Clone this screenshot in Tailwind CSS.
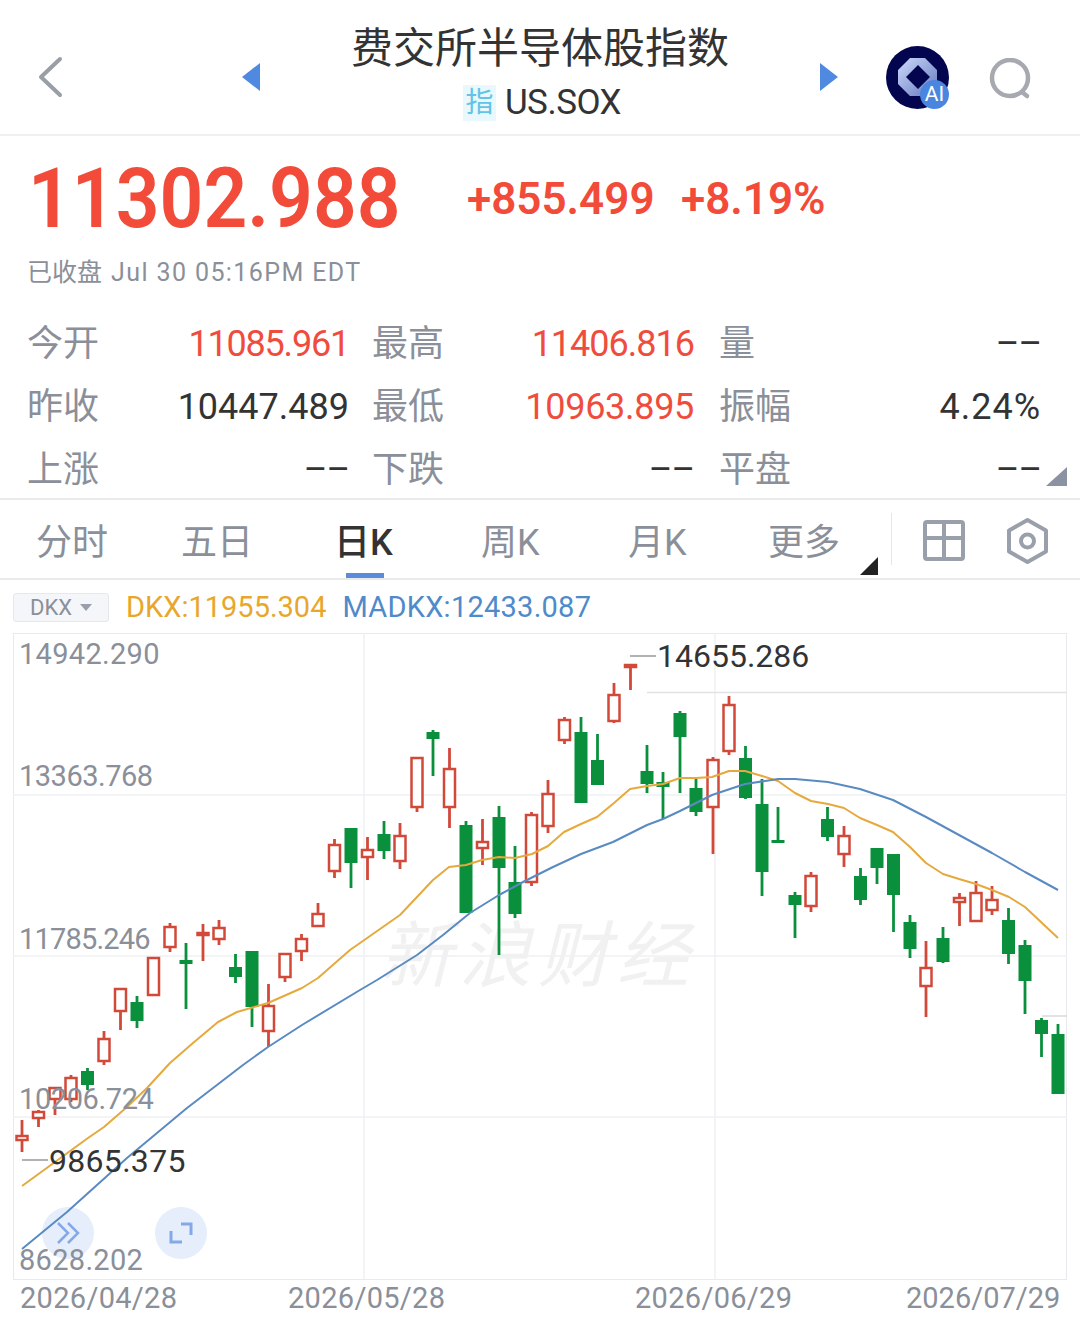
<!DOCTYPE html>
<html lang="zh-CN">
<head>
<meta charset="UTF-8">
<meta name="viewport" content="width=device-width, initial-scale=1.0">
<title>费交所半导体股指数</title>
<script src="https://cdn.jsdelivr.net/npm/@tailwindcss/browser@4"></script>
</head>
<body class="bg-white">
<div class="w-[1080px] h-[1325px] overflow-hidden bg-white font-['Roboto','Noto_Sans_CJK_SC',sans-serif]">

  <!-- header -->
  <header class="h-[136px] border-b-2 border-[#f0f0f0] flex items-start relative">
    <div class="w-[242px] pl-[38px] pt-[56px]">
      <svg width="26" height="42" viewBox="0 0 26 42" fill="none" stroke="#9a9ea6" stroke-width="4" stroke-linecap="round" stroke-linejoin="round"><path d="M22 3 3 21l19 18"/></svg>
    </div>
    <div class="pt-[63px]"><svg width="19" height="28" viewBox="0 0 19 28"><path d="M18 0v28L0 14z" fill="#4f8ae0"/></svg></div>
    <div class="w-[558px] flex flex-col items-center pt-[22px]">
      <h1 class="text-[42px] leading-[54px] text-[#333333] font-normal">费交所半导体股指数</h1>
      <div class="flex items-center mt-[9px] ml-[4px]">
        <span class="w-[33px] h-[36px] bg-[#e8f8fd] text-[#62c3e6] text-[28px] leading-[36px] text-center">指</span>
        <span class="ml-[9px] text-[35px] leading-[36px] text-[#333333] tracking-[-0.5px]">US.SOX</span>
      </div>
    </div>
    <div class="pt-[63px]"><svg width="19" height="28" viewBox="0 0 19 28"><path d="M1 0v28l18-14z" fill="#4f8ae0"/></svg></div>
    <div class="absolute left-[886px] top-[46px] w-[63px] h-[63px]">
      <svg width="63" height="63" viewBox="0 0 63 63">
        <defs><linearGradient id="ring" x1="0" y1="0" x2="1" y2="1"><stop offset="0" stop-color="#cddafc"/><stop offset="1" stop-color="#6478bd"/></linearGradient></defs>
        <circle cx="31.5" cy="31.500" r="31.5" fill="#03064f"/>
        <path fill-rule="evenodd" d="M24 12H39L51 24V38L39 50H24L12 38V24ZM32 19 20 31 32 43 44 31Z" fill="url(#ring)"/>
      </svg>
      <span class="absolute left-[34px] top-[34px] w-[29px] h-[29px] rounded-full bg-[#4a86e0] text-white text-[21px] leading-[29px] text-center">AI</span>
    </div>
    <div class="absolute left-[989px] top-[58px]">
      <svg width="43" height="43" viewBox="0 0 43 43" fill="none" stroke="#a6a9af" stroke-width="4.5" stroke-linecap="round"><circle cx="21" cy="20" r="18"/><path d="M33 34l5 4"/></svg>
    </div>
  </header>

  <!-- quote -->
  <section class="h-[362px] relative">
    <div class="flex items-center pl-[28px] pt-[20px] h-[106px]">
      <span class="w-[439px] text-[83px] leading-[90px] font-semibold text-[#f24b39] origin-left scale-x-[0.925]">11302.988</span>
      <span class="w-[214px] text-[44px] font-semibold text-[#f24b39]">+855.499</span>
      <span class="text-[44px] font-semibold text-[#f24b39]">+8.19%</span>
    </div>
    <p class="pl-[27px] mt-[16px] text-[25px] leading-[30px] text-[#8a8f99]">已收盘<span class="ml-[9px] tracking-[1.4px]">Jul 30 05:16PM EDT</span></p>
    <div class="grid grid-cols-[345px_347px_322px] pl-[27px] mt-[25px] text-[36px] leading-[63px] text-[#8a8f99]">
      <div class="flex justify-between"><span>今开</span><span class="text-[#f04c3e] mr-[23px] tracking-[-1.2px]">11085.961</span></div>
      <div class="flex justify-between"><span>最高</span><span class="text-[#f04c3e] mr-[25px] tracking-[-1px]">11406.816</span></div>
      <div class="flex justify-between"><span>量</span><span class="text-[#333333] tracking-[-1px]">––</span></div>
      <div class="flex justify-between"><span>昨收</span><span class="text-[#333333] mr-[23px]">10447.489</span></div>
      <div class="flex justify-between"><span>最低</span><span class="text-[#f04c3e] mr-[25px] tracking-[-0.3px]">10963.895</span></div>
      <div class="flex justify-between"><span>振幅</span><span class="text-[#333333] tracking-[1px]">4.24%</span></div>
      <div class="flex justify-between"><span>上涨</span><span class="text-[#333333] mr-[23px] tracking-[-1px]">––</span></div>
      <div class="flex justify-between"><span>下跌</span><span class="text-[#333333] mr-[25px] tracking-[-1px]">––</span></div>
      <div class="flex justify-between"><span>平盘</span><span class="text-[#333333] tracking-[-1px]">––</span></div>
    </div>
    <div class="absolute right-[13px] bottom-[12px] w-0 h-0 border-l-[21px] border-l-transparent border-b-[19px] border-b-[#8b93a3]"></div>
  </section>

  <!-- period tabs -->
  <nav class="h-[82px] border-t-2 border-b-2 border-[#eaeaea] flex items-center relative text-[36px] text-[#8a8f99]">
    <span class="absolute left-[36px] top-[16px]">分时</span>
    <span class="absolute left-[181px] top-[16px]">五日</span>
    <span class="absolute left-[334px] top-[16px] text-[#333333] font-medium">日K</span>
    <span class="absolute left-[481px] top-[16px]">周K</span>
    <span class="absolute left-[628px] top-[16px]">月K</span>
    <span class="absolute left-[768px] top-[16px]">更多</span>
    <span class="absolute left-[346px] bottom-0 w-[38px] h-[5px] bg-[#5b8bd9]"></span>
    <span class="absolute left-[860px] top-[57px] w-0 h-0 border-l-[18px] border-l-transparent border-b-[18px] border-b-[#222222]"></span>
    <span class="absolute left-[891px] top-[13px] w-px h-[52px] bg-[#e6e6e6]"></span>
    <svg class="absolute left-[923px] top-[20px]" width="42" height="41" viewBox="0 0 42 41" fill="none" stroke="#9aa0ab" stroke-width="4" stroke-linejoin="round"><rect x="2" y="2" width="38" height="37" rx="2"/><path d="M21 2v37M2 18h38"/></svg>
    <svg class="absolute left-[1007px] top-[18px]" width="41" height="46" viewBox="0 0 41 46" fill="none" stroke="#9aa0ab" stroke-width="4" stroke-linejoin="round"><path d="M20.5 2 39 12.5v21L20.5 44 2 33.500v-21z"/><circle cx="20.500" cy="23" r="6.500"/></svg>
  </nav>

  <!-- indicator legend -->
  <div class="h-[53px] flex items-center pl-[13px] pt-[2px] text-[29px]">
    <div class="w-[96px] h-[29px] flex items-center justify-center bg-[#f5f6f9] border border-[#e6e8ee] rounded-[3px] text-[22px] text-[#8a8f99]">DKX<span class="ml-[8px] w-0 h-0 border-x-[6px] border-x-transparent border-t-[7px] border-t-[#9aa0ab]"></span></div>
    <span class="ml-[17px] text-[#e8a72c]">DKX:11955.304</span>
    <span class="ml-[16px] text-[#4f8ac9] tracking-[0.25px]">MADKX:12433.087</span>
  </div>

  <!-- k-line chart -->
  <div class="relative ml-[13px] w-[1054px] h-[647px] border border-[#e8eaee]">
    <span class="absolute left-[366px] top-[283px] text-[72px] leading-[80px] italic text-[#f1f1f1] tracking-[7px]">新浪财经</span>
    <div class="absolute left-[28px] top-[573px] w-[52px] h-[52px] rounded-full bg-[#dfeaf9]/80"></div>
    <div class="absolute left-[141px] top-[573px] w-[52px] h-[52px] rounded-full bg-[#dfeaf9]/80"></div>
    <svg id="chart" class="absolute left-[-1px] top-[-1px]" width="1054" height="647" viewBox="13 633 1054 647"></svg>
    <span class="absolute left-[5px] top-[3px] text-[29px] leading-[34px] text-[#8a8f99] tracking-[0.3px]">14942.290</span>
    <span class="absolute left-[5px] top-[125px] text-[29px] leading-[34px] text-[#8a8f99] tracking-[-0.5px]">13363.768</span>
    <span class="absolute left-[5px] top-[288px] text-[29px] leading-[34px] text-[#8a8f99] tracking-[-0.8px]">11785.246</span>
    <span class="absolute left-[5px] top-[448px] text-[29px] leading-[34px] text-[#8a8f99] tracking-[-0.4px]">10206.724</span>
    <span class="absolute left-[5px] top-[609px] text-[29px] leading-[34px] text-[#8a8f99] tracking-[0.3px]">8628.202</span>
    <span class="absolute left-[643px] top-[4px] text-[32px] leading-[36px] text-[#333333]">14655.286</span>
    <span class="absolute left-[35px] top-[509px] text-[32px] leading-[36px] text-[#333333] tracking-[0.3px]">9865.375</span>
  </div>

  <!-- date axis -->
  <div class="relative h-[40px] text-[29px] leading-[36px] text-[#8a8f99] tracking-[0.3px]">
    <span class="absolute left-[20px] top-0">2026/04/28</span>
    <span class="absolute left-[288px] top-0">2026/05/28</span>
    <span class="absolute left-[635px] top-0">2026/06/29</span>
    <span class="absolute left-[906px] top-0 tracking-normal">2026/07/29</span>
  </div>
</div>

<script>
  // x, high, body top, body bottom, low, up?
  const candles = [
    [22,1120,1135,1141,1152,1],[38.5,1110,1111,1119,1127,1],[55,1087,1087,1100,1115,1],[71,1075,1077,1100,1102,1],
    [87.5,1068,1071,1085,1090,0],[104,1031,1038,1062,1065,1],[120.5,988,988,1012,1030,1],[137,996,1002,1021,1028,0],
    [153.5,957,957,996,996,1],[170,923,926,948,952,1],[186,943,960,964,1009,0],[203,924,932,936,961,1],
    [219,920,927,940,945,1],[235.5,954,967,977,983,0],[252,951,951,1007,1027,0],[268.5,984,1005,1032,1047,1],
    [285,953,953,978,982,1],[301.5,934,938,952,961,1],[318,903,913,927,927,1],[334.5,839,844,872,878,1],
    [351,828,828,863,888,0],[367.5,837,849,858,880,1],[384,821,834,851,859,0],[400,823,835,862,869,1],
    [417,757,757,808,812,1],[433,730,732,739,776,0],[449.5,748,768,808,828,1],[466,821,825,913,913,0],
    [482.5,819,841,849,865,1],[499,806,817,868,955,0],[515,846,882,914,918,0],[531.5,812,814,883,886,1],
    [548,780,793,827,833,1],[564.5,717,719,741,744,1],[581,717,732,803,803,0],[597.5,734,760,785,785,0],
    [614,683,694,722,723,1],[630.5,664,664,668,690,1],[647,745,771,784,793,0],[663,772,782,787,819,0],
    [680,711,713,737,793,0],[696,779,788,812,816,0],[713,757,759,808,854,1],[729,696,704,752,755,1],
    [745.5,746,758,798,799,0],[762,779,804,872,896,0],[778,807,840,843,843,0],[795,892,895,905,938,0],
    [811,872,875,907,912,1],[827.5,807,819,837,841,0],[844,826,835,855,867,1],[860.5,868,876,900,905,0],
    [877,848,848,868,884,0],[893.5,854,854,895,932,0],[910,915,922,949,958,0],[926,941,967,987,1017,1],
    [943,927,938,962,963,0],[959.5,893,897,903,926,1],[976,881,892,922,922,1],[992,886,899,911,915,1],
    [1008.5,908,920,954,964,0],[1025,940,945,981,1014,0],[1041.5,1018,1020,1034,1057,0],[1058,1024,1034,1094,1094,0]
  ];
  const dkx = "22,1186 55,1162 88,1138 104,1127 127,1107 147,1088 170,1063 193,1043 218,1022 237,1012 268,1003 302,988 318,978 350,950 400,915 433,880 449,867 466,865 482,860 499,857 515,858 532,854 548,846 564,832 581,824 597,817 614,803 630,789 647,786 663,784 680,778 696,778 712,777 729,771 745,771 762,776 778,781 795,793 811,801 828,804 844,808 860,818 877,825 893,832 910,847 926,863 943,874 959,879 976,884 992,890 1009,897 1025,907 1042,923 1058,938";
  const madkx = "22,1249 67,1212 127,1158 187,1108 243,1065 268,1047 302,1025 360,990 377,980 417,955 443,935 470,913 499,895 523,882 553,867 581,854 613,842 647,825 663,819 680,811 712,795 745,784 778,779 795,779 828,782 860,789 893,800 926,817 959,835 992,853 1025,872 1058,890";

  const red = "#d2493a", green = "#0a8f3c", grid = "#eef0f3";
  let svg = "";
  // grid
  [795, 956, 1117].forEach(y => svg += `<path d="M13 ${y}H1067" stroke="${grid}" stroke-width="1.500"/>`);
  [364, 715].forEach(x => svg += `<path d="M${x} 633V1279" stroke="${grid}" stroke-width="1.500"/>`);
  candles.forEach(([x, hi, top, bot, lo, up]) => {
    const c = up ? red : green;
    svg += `<path d="M${x} ${hi}V${lo}" stroke="${c}" stroke-width="2.800"/>`;
    if (up) svg += `<rect x="${x - 5.500}" y="${top + 1}" width="11" height="${Math.max(bot - top - 2, 1)}" fill="#fff" stroke="${c}" stroke-width="2.500"/>`;
    else svg += `<rect x="${x - 6.500}" y="${top}" width="13" height="${bot - top}" fill="${c}"/>`;
  });
  svg += `<polyline points="${dkx}" fill="none" stroke="#e5a93d" stroke-width="2" stroke-linejoin="round"/>`;
  svg += `<polyline points="${madkx}" fill="none" stroke="#5a8ac2" stroke-width="2" stroke-linejoin="round"/>`;
  // high / low markers
  svg += `<path d="M630 656H656" stroke="#999" stroke-width="1.500"/><path d="M647 692.500H1067" stroke="#e2e2e2" stroke-width="1.500"/>`;
  svg += `<path d="M22 1160H48" stroke="#999" stroke-width="1.500"/><path d="M1042 1016H1067" stroke="#d8d8d8" stroke-width="1.500"/>`;
  // round buttons
  svg += `<path d="M58 1223l10 10-10 10M68 1223l10 10-10 10" fill="none" stroke="#85a9e8" stroke-width="2.500"/>`;
  svg += `<path d="M171 1231v11h11M181 1224h10v11" fill="none" stroke="#85a9e8" stroke-width="3"/>`;
  document.getElementById("chart").innerHTML = svg;
</script>
</body>
</html>
